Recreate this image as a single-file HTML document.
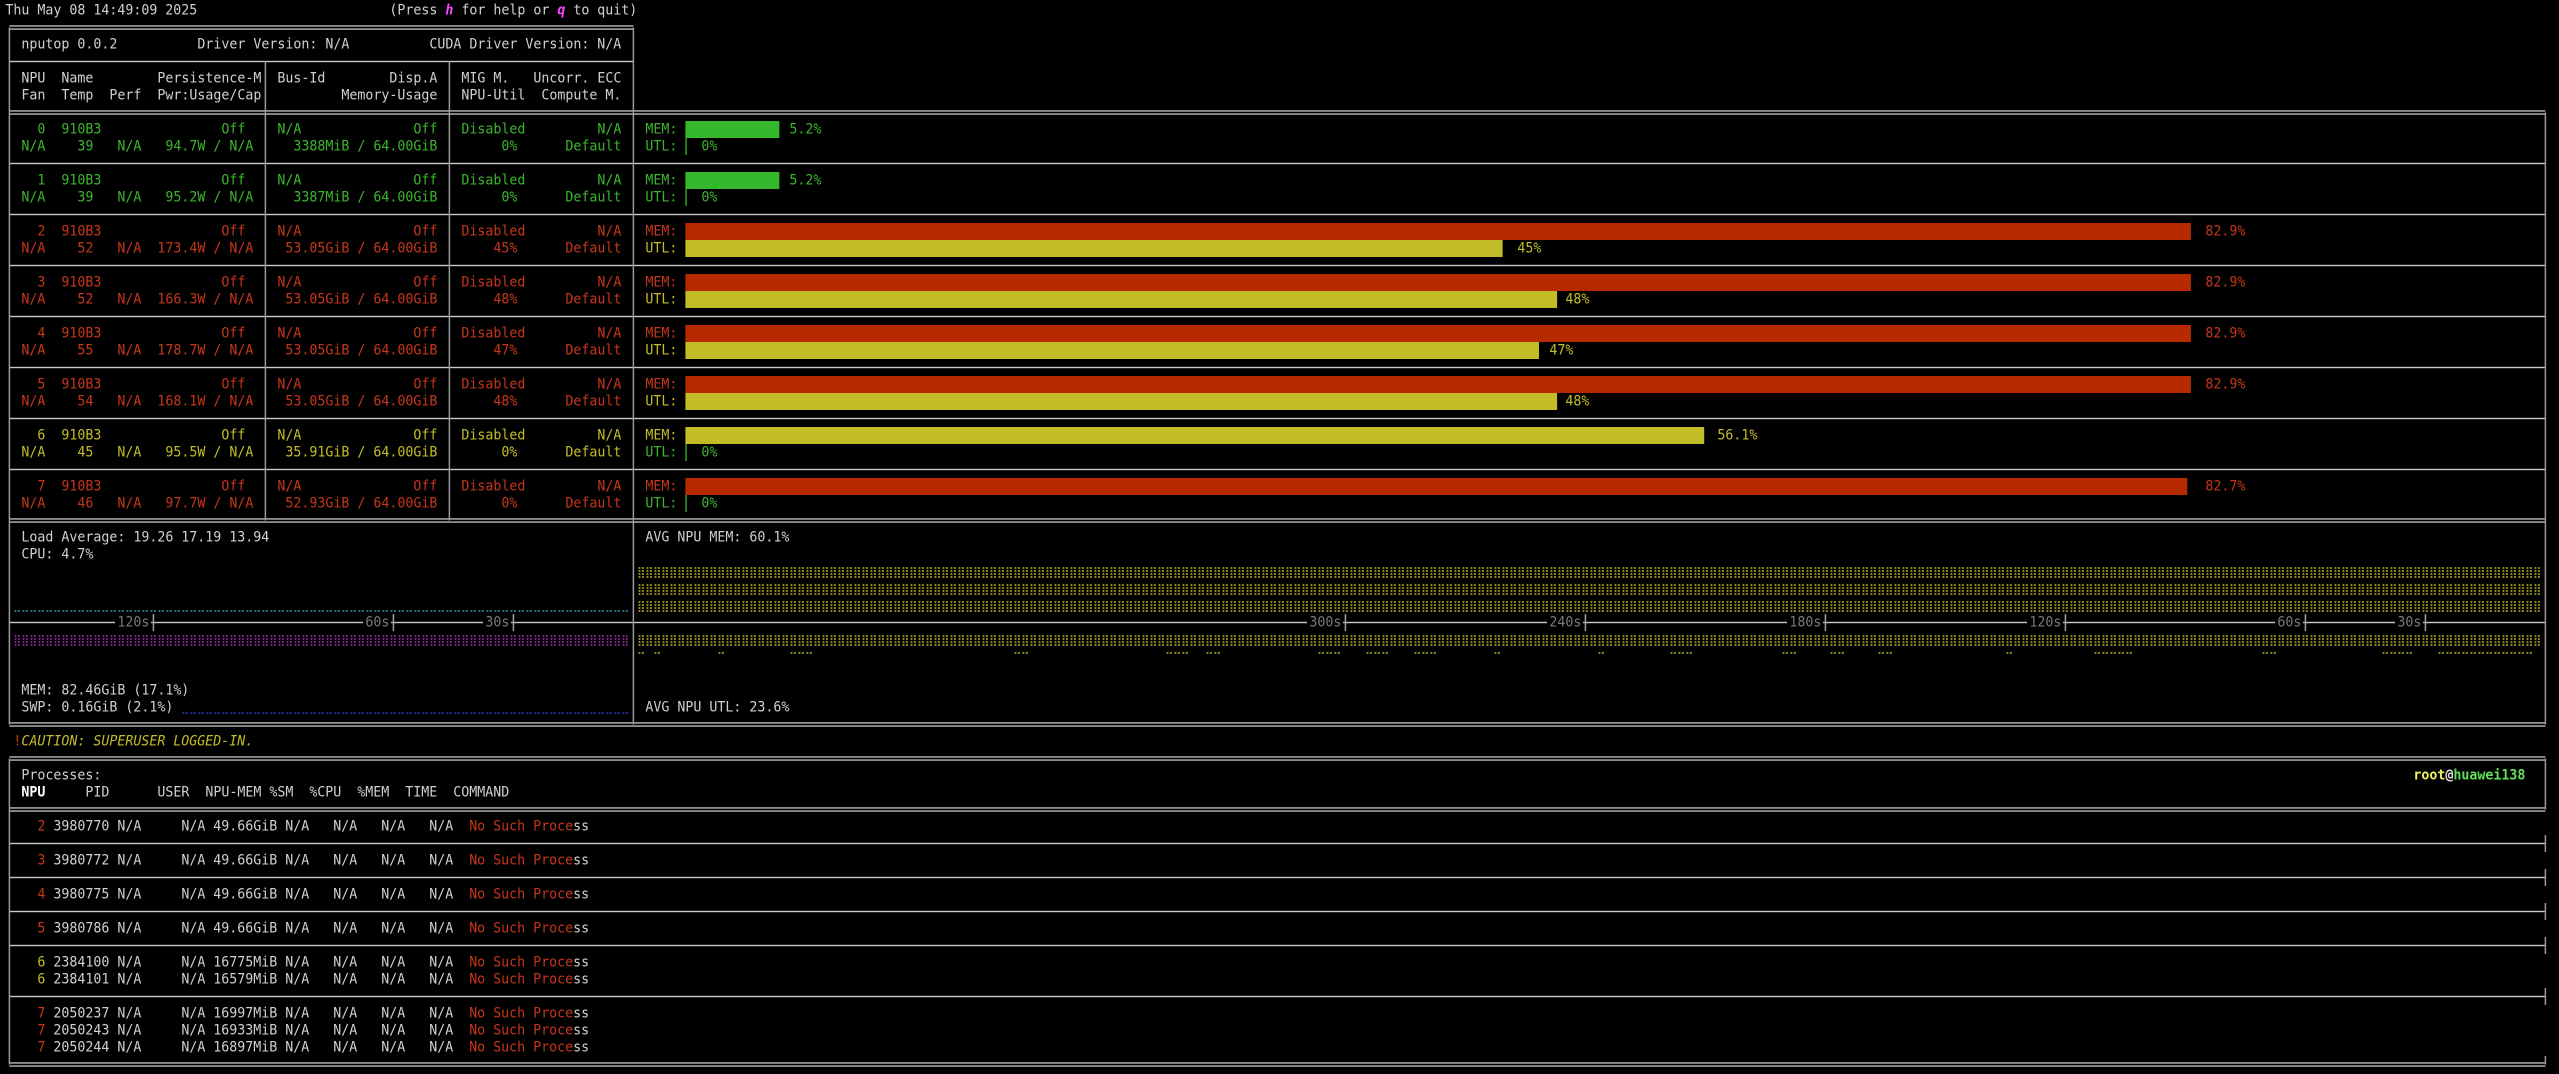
<!DOCTYPE html>
<html><head><meta charset="utf-8"><style>
html,body{margin:0;padding:0;background:#000;width:2559px;height:1074px;overflow:hidden}
#s{position:absolute;left:0;top:0}
.t{position:absolute;white-space:pre;left:calc(5.4px + var(--c)*8px);top:calc(2px + var(--r)*17px);line-height:17px;height:17px;font-family:"DejaVu Sans Mono","Liberation Mono",monospace;font-size:13.29px;color:#d0d0d0;transform:scaleY(1.08);transform-origin:50% 50%}
.g{color:#3cb52d}.r{color:#c6361a}.y{color:#c4bd2a}.gr{color:#7a7a7a;background:#000;padding:0 2px;margin-left:-2px}
.m{color:#ff45ff;font-weight:bold;font-style:italic}
</style></head><body>
<svg id="s" width="2559" height="1074" xmlns="http://www.w3.org/2000/svg">
<defs>
<pattern id="py" x="5.4" y="2" width="8" height="17" patternUnits="userSpaceOnUse"><g fill="#bdb524"><rect x="1.2" y="4.2" width="1.8" height="1.6"/><rect x="4.6" y="4.2" width="1.8" height="1.6"/><rect x="1.2" y="7.2" width="1.8" height="1.6"/><rect x="4.6" y="7.2" width="1.8" height="1.6"/><rect x="1.2" y="10.2" width="1.8" height="1.6"/><rect x="4.6" y="10.2" width="1.8" height="1.6"/><rect x="1.2" y="13.2" width="1.8" height="1.6"/><rect x="4.6" y="13.2" width="1.8" height="1.6"/></g></pattern>
<pattern id="pp" x="5.4" y="2" width="8" height="17" patternUnits="userSpaceOnUse"><g fill="#a62cae"><rect x="1.2" y="4.2" width="1.8" height="1.6"/><rect x="4.6" y="4.2" width="1.8" height="1.6"/><rect x="1.2" y="7.2" width="1.8" height="1.6"/><rect x="4.6" y="7.2" width="1.8" height="1.6"/><rect x="1.2" y="10.2" width="1.8" height="1.6"/><rect x="4.6" y="10.2" width="1.8" height="1.6"/><rect x="1.2" y="13.2" width="1.8" height="1.6"/><rect x="4.6" y="13.2" width="1.8" height="1.6"/></g></pattern>
<pattern id="pc" x="5.4" y="2" width="8" height="17" patternUnits="userSpaceOnUse"><g fill="#2aa6b4"><rect x="1.2" y="13.2" width="1.8" height="1.6"/><rect x="4.6" y="13.2" width="1.8" height="1.6"/></g></pattern>
<pattern id="pb" x="5.4" y="2" width="8" height="17" patternUnits="userSpaceOnUse"><g fill="#2a3ccc"><rect x="1.2" y="13.2" width="1.8" height="1.6"/><rect x="4.6" y="13.2" width="1.8" height="1.6"/></g></pattern>
<pattern id="pt" x="5.4" y="2" width="8" height="17" patternUnits="userSpaceOnUse"><g fill="#bdb524"><rect x="1.2" y="4.2" width="1.8" height="1.6"/><rect x="4.6" y="4.2" width="1.8" height="1.6"/></g></pattern>
</defs>
<!-- horizontal lines -->
<g fill="#c8c8c8">
<rect x="9.4" y="25.3" width="624" height="1.3"/><rect x="9.4" y="28.4" width="624" height="1.3"/>
<rect x="9.4" y="60.8" width="624" height="1.4"/>
<rect x="9.4" y="110.3" width="2536" height="1.3"/><rect x="9.4" y="113.4" width="2536" height="1.3"/>
<rect x="9.4" y="162.8" width="2536" height="1.4"/>
<rect x="9.4" y="213.8" width="2536" height="1.4"/>
<rect x="9.4" y="264.8" width="2536" height="1.4"/>
<rect x="9.4" y="315.8" width="2536" height="1.4"/>
<rect x="9.4" y="366.8" width="2536" height="1.4"/>
<rect x="9.4" y="417.8" width="2536" height="1.4"/>
<rect x="9.4" y="468.8" width="2536" height="1.4"/>
<rect x="9.4" y="518.3" width="2536" height="1.3"/><rect x="9.4" y="521.4" width="2536" height="1.3"/>
<rect x="9.4" y="621.8" width="2536" height="1.4"/>
<rect x="9.4" y="722.3" width="2536" height="1.3"/><rect x="9.4" y="725.4" width="2536" height="1.3"/>
<rect x="9.4" y="756.3" width="2536" height="1.3"/><rect x="9.4" y="759.4" width="2536" height="1.3"/>
<rect x="9.4" y="807.3" width="2536" height="1.3"/><rect x="9.4" y="810.4" width="2536" height="1.3"/>
<rect x="9.4" y="842.8" width="2536" height="1.4"/>
<rect x="9.4" y="876.8" width="2536" height="1.4"/>
<rect x="9.4" y="910.8" width="2536" height="1.4"/>
<rect x="9.4" y="944.8" width="2536" height="1.4"/>
<rect x="9.4" y="995.8" width="2536" height="1.4"/>
<rect x="9.4" y="1062.3" width="2536" height="1.3"/><rect x="9.4" y="1065.4" width="2536" height="1.3"/>
</g>
<!-- verticals -->
<g fill="#9a9a9a">
<rect x="8.65" y="27.5" width="1.5" height="697"/><rect x="8.65" y="758.5" width="1.5" height="306"/>
<rect x="264.65" y="61.5" width="1.5" height="459"/><rect x="448.65" y="61.5" width="1.5" height="459"/>
<rect x="632.65" y="27.5" width="1.5" height="697"/>
<rect x="2544.65" y="112.5" width="1.5" height="612"/><rect x="2544.65" y="758.5" width="1.5" height="51"/>
<rect x="2544.65" y="835" width="1.5" height="17"/><rect x="2544.65" y="869" width="1.5" height="17"/>
<rect x="2544.65" y="903" width="1.5" height="17"/><rect x="2544.65" y="937" width="1.5" height="17"/>
<rect x="2544.65" y="988" width="1.5" height="17"/><rect x="2544.65" y="1056" width="1.5" height="8.5"/>
<rect x="152.65" y="614" width="1.6" height="17"/><rect x="392.65" y="614" width="1.6" height="17"/><rect x="512.65" y="614" width="1.6" height="17"/>
<rect x="1344.65" y="614" width="1.6" height="17"/><rect x="1584.65" y="614" width="1.6" height="17"/><rect x="1824.65" y="614" width="1.6" height="17"/>
<rect x="2064.65" y="614" width="1.6" height="17"/><rect x="2304.65" y="614" width="1.6" height="17"/><rect x="2424.65" y="614" width="1.6" height="17"/>
</g>
<!-- bars -->
<rect x="685.4" y="121" width="94" height="17" fill="#34b82c"/><rect x="685.4" y="138" width="1.3" height="17" fill="#34b82c"/>
<rect x="685.4" y="172" width="94" height="17" fill="#34b82c"/><rect x="685.4" y="189" width="1.3" height="17" fill="#34b82c"/>
<rect x="685.4" y="223" width="1505.5" height="17" fill="#b72a00"/><rect x="685.4" y="240" width="817.2" height="17" fill="#c2bc26"/>
<rect x="685.4" y="274" width="1505.5" height="17" fill="#b72a00"/><rect x="685.4" y="291" width="871.7" height="17" fill="#c2bc26"/>
<rect x="685.4" y="325" width="1505.5" height="17" fill="#b72a00"/><rect x="685.4" y="342" width="853.6" height="17" fill="#c2bc26"/>
<rect x="685.4" y="376" width="1505.5" height="17" fill="#b72a00"/><rect x="685.4" y="393" width="871.7" height="17" fill="#c2bc26"/>
<rect x="685.4" y="427" width="1018.8" height="17" fill="#c2bc26"/><rect x="685.4" y="444" width="1.3" height="17" fill="#34b82c"/>
<rect x="685.4" y="478" width="1501.9" height="17" fill="#b72a00"/><rect x="685.4" y="495" width="1.3" height="17" fill="#34b82c"/>
<!-- graphs -->
<rect x="13.4" y="597" width="616" height="17" fill="url(#pc)"/>
<rect x="13.4" y="631" width="616" height="17" fill="url(#pp)"/>
<rect x="181.4" y="699" width="448" height="17" fill="url(#pb)"/>
<rect x="637.4" y="563" width="1904" height="17" fill="url(#py)"/>
<rect x="637.4" y="580" width="1904" height="17" fill="url(#py)"/>
<rect x="637.4" y="597" width="1904" height="17" fill="url(#py)"/>
<rect x="637.4" y="631" width="1904" height="17" fill="url(#py)"/>
<g fill="url(#pt)">
<rect x="637.4" y="648" width="8" height="17"/><rect x="653.4" y="648" width="8" height="17"/><rect x="717.4" y="648" width="8" height="17"/>
<rect x="789.4" y="648" width="24" height="17"/><rect x="1013.4" y="648" width="16" height="17"/><rect x="1165.4" y="648" width="24" height="17"/>
<rect x="1205.4" y="648" width="16" height="17"/><rect x="1317.4" y="648" width="24" height="17"/><rect x="1365.4" y="648" width="24" height="17"/>
<rect x="1413.4" y="648" width="24" height="17"/><rect x="1493.4" y="648" width="8" height="17"/><rect x="1597.4" y="648" width="8" height="17"/>
<rect x="1669.4" y="648" width="24" height="17"/><rect x="1781.4" y="648" width="16" height="17"/><rect x="1829.4" y="648" width="16" height="17"/>
<rect x="1877.4" y="648" width="16" height="17"/><rect x="2005.4" y="648" width="8" height="17"/><rect x="2093.4" y="648" width="40" height="17"/>
<rect x="2261.4" y="648" width="16" height="17"/><rect x="2381.4" y="648" width="32" height="17"/><rect x="2437.4" y="648" width="96" height="17"/>
</g>
</svg>

<div class="t" style="--c:0;--r:0">Thu May 08 14:49:09 2025</div>
<div class="t" style="--c:48;--r:0">(Press <span class="m">h</span> for help or <span class="m">q</span> to quit)</div>
<div class="t" style="--c:2;--r:2">nputop 0.0.2</div>
<div class="t" style="--c:24;--r:2">Driver Version: N/A</div>
<div class="t" style="--c:53;--r:2">CUDA Driver Version: N/A</div>
<div class="t" style="--c:2;--r:4">NPU  Name</div>
<div class="t" style="--c:19;--r:4">Persistence-M</div>
<div class="t" style="--c:34;--r:4">Bus-Id</div>
<div class="t" style="--c:48;--r:4">Disp.A</div>
<div class="t" style="--c:57;--r:4">MIG M.</div>
<div class="t" style="--c:66;--r:4">Uncorr. ECC</div>
<div class="t" style="--c:2;--r:5">Fan  Temp  Perf</div>
<div class="t" style="--c:19;--r:5">Pwr:Usage/Cap</div>
<div class="t" style="--c:42;--r:5">Memory-Usage</div>
<div class="t" style="--c:57;--r:5">NPU-Util</div>
<div class="t" style="--c:67;--r:5">Compute M.</div>

<!-- NPU 0 -->
<div class="t g" style="--c:4;--r:7">0  910B3</div><div class="t g" style="--c:27;--r:7">Off</div><div class="t g" style="--c:34;--r:7">N/A</div><div class="t g" style="--c:51;--r:7">Off</div><div class="t g" style="--c:57;--r:7">Disabled</div><div class="t g" style="--c:74;--r:7">N/A</div><div class="t g" style="--c:80;--r:7">MEM:</div><div class="t g" style="--c:98;--r:7">5.2%</div>
<div class="t g" style="--c:2;--r:8">N/A</div><div class="t g" style="--c:9;--r:8">39</div><div class="t g" style="--c:14;--r:8">N/A</div><div class="t g" style="--c:20;--r:8">94.7W / N/A</div><div class="t g" style="--c:36;--r:8">3388MiB / 64.00GiB</div><div class="t g" style="--c:62;--r:8">0%</div><div class="t g" style="--c:70;--r:8">Default</div><div class="t g" style="--c:80;--r:8">UTL:</div><div class="t g" style="--c:87;--r:8">0%</div>
<!-- NPU 1 -->
<div class="t g" style="--c:4;--r:10">1  910B3</div><div class="t g" style="--c:27;--r:10">Off</div><div class="t g" style="--c:34;--r:10">N/A</div><div class="t g" style="--c:51;--r:10">Off</div><div class="t g" style="--c:57;--r:10">Disabled</div><div class="t g" style="--c:74;--r:10">N/A</div><div class="t g" style="--c:80;--r:10">MEM:</div><div class="t g" style="--c:98;--r:10">5.2%</div>
<div class="t g" style="--c:2;--r:11">N/A</div><div class="t g" style="--c:9;--r:11">39</div><div class="t g" style="--c:14;--r:11">N/A</div><div class="t g" style="--c:20;--r:11">95.2W / N/A</div><div class="t g" style="--c:36;--r:11">3387MiB / 64.00GiB</div><div class="t g" style="--c:62;--r:11">0%</div><div class="t g" style="--c:70;--r:11">Default</div><div class="t g" style="--c:80;--r:11">UTL:</div><div class="t g" style="--c:87;--r:11">0%</div>
<!-- NPU 2 -->
<div class="t r" style="--c:4;--r:13">2  910B3</div><div class="t r" style="--c:27;--r:13">Off</div><div class="t r" style="--c:34;--r:13">N/A</div><div class="t r" style="--c:51;--r:13">Off</div><div class="t r" style="--c:57;--r:13">Disabled</div><div class="t r" style="--c:74;--r:13">N/A</div><div class="t r" style="--c:80;--r:13">MEM:</div><div class="t r" style="--c:275;--r:13">82.9%</div>
<div class="t r" style="--c:2;--r:14">N/A</div><div class="t r" style="--c:9;--r:14">52</div><div class="t r" style="--c:14;--r:14">N/A</div><div class="t r" style="--c:19;--r:14">173.4W / N/A</div><div class="t r" style="--c:35;--r:14">53.05GiB / 64.00GiB</div><div class="t r" style="--c:61;--r:14">45%</div><div class="t r" style="--c:70;--r:14">Default</div><div class="t y" style="--c:80;--r:14">UTL:</div><div class="t y" style="--c:189;--r:14">45%</div>
<!-- NPU 3 -->
<div class="t r" style="--c:4;--r:16">3  910B3</div><div class="t r" style="--c:27;--r:16">Off</div><div class="t r" style="--c:34;--r:16">N/A</div><div class="t r" style="--c:51;--r:16">Off</div><div class="t r" style="--c:57;--r:16">Disabled</div><div class="t r" style="--c:74;--r:16">N/A</div><div class="t r" style="--c:80;--r:16">MEM:</div><div class="t r" style="--c:275;--r:16">82.9%</div>
<div class="t r" style="--c:2;--r:17">N/A</div><div class="t r" style="--c:9;--r:17">52</div><div class="t r" style="--c:14;--r:17">N/A</div><div class="t r" style="--c:19;--r:17">166.3W / N/A</div><div class="t r" style="--c:35;--r:17">53.05GiB / 64.00GiB</div><div class="t r" style="--c:61;--r:17">48%</div><div class="t r" style="--c:70;--r:17">Default</div><div class="t y" style="--c:80;--r:17">UTL:</div><div class="t y" style="--c:195;--r:17">48%</div>
<!-- NPU 4 -->
<div class="t r" style="--c:4;--r:19">4  910B3</div><div class="t r" style="--c:27;--r:19">Off</div><div class="t r" style="--c:34;--r:19">N/A</div><div class="t r" style="--c:51;--r:19">Off</div><div class="t r" style="--c:57;--r:19">Disabled</div><div class="t r" style="--c:74;--r:19">N/A</div><div class="t r" style="--c:80;--r:19">MEM:</div><div class="t r" style="--c:275;--r:19">82.9%</div>
<div class="t r" style="--c:2;--r:20">N/A</div><div class="t r" style="--c:9;--r:20">55</div><div class="t r" style="--c:14;--r:20">N/A</div><div class="t r" style="--c:19;--r:20">178.7W / N/A</div><div class="t r" style="--c:35;--r:20">53.05GiB / 64.00GiB</div><div class="t r" style="--c:61;--r:20">47%</div><div class="t r" style="--c:70;--r:20">Default</div><div class="t y" style="--c:80;--r:20">UTL:</div><div class="t y" style="--c:193;--r:20">47%</div>
<!-- NPU 5 -->
<div class="t r" style="--c:4;--r:22">5  910B3</div><div class="t r" style="--c:27;--r:22">Off</div><div class="t r" style="--c:34;--r:22">N/A</div><div class="t r" style="--c:51;--r:22">Off</div><div class="t r" style="--c:57;--r:22">Disabled</div><div class="t r" style="--c:74;--r:22">N/A</div><div class="t r" style="--c:80;--r:22">MEM:</div><div class="t r" style="--c:275;--r:22">82.9%</div>
<div class="t r" style="--c:2;--r:23">N/A</div><div class="t r" style="--c:9;--r:23">54</div><div class="t r" style="--c:14;--r:23">N/A</div><div class="t r" style="--c:19;--r:23">168.1W / N/A</div><div class="t r" style="--c:35;--r:23">53.05GiB / 64.00GiB</div><div class="t r" style="--c:61;--r:23">48%</div><div class="t r" style="--c:70;--r:23">Default</div><div class="t y" style="--c:80;--r:23">UTL:</div><div class="t y" style="--c:195;--r:23">48%</div>
<!-- NPU 6 -->
<div class="t y" style="--c:4;--r:25">6  910B3</div><div class="t y" style="--c:27;--r:25">Off</div><div class="t y" style="--c:34;--r:25">N/A</div><div class="t y" style="--c:51;--r:25">Off</div><div class="t y" style="--c:57;--r:25">Disabled</div><div class="t y" style="--c:74;--r:25">N/A</div><div class="t y" style="--c:80;--r:25">MEM:</div><div class="t y" style="--c:214;--r:25">56.1%</div>
<div class="t y" style="--c:2;--r:26">N/A</div><div class="t y" style="--c:9;--r:26">45</div><div class="t y" style="--c:14;--r:26">N/A</div><div class="t y" style="--c:20;--r:26">95.5W / N/A</div><div class="t y" style="--c:35;--r:26">35.91GiB / 64.00GiB</div><div class="t y" style="--c:62;--r:26">0%</div><div class="t y" style="--c:70;--r:26">Default</div><div class="t g" style="--c:80;--r:26">UTL:</div><div class="t g" style="--c:87;--r:26">0%</div>
<!-- NPU 7 -->
<div class="t r" style="--c:4;--r:28">7  910B3</div><div class="t r" style="--c:27;--r:28">Off</div><div class="t r" style="--c:34;--r:28">N/A</div><div class="t r" style="--c:51;--r:28">Off</div><div class="t r" style="--c:57;--r:28">Disabled</div><div class="t r" style="--c:74;--r:28">N/A</div><div class="t r" style="--c:80;--r:28">MEM:</div><div class="t r" style="--c:275;--r:28">82.7%</div>
<div class="t r" style="--c:2;--r:29">N/A</div><div class="t r" style="--c:9;--r:29">46</div><div class="t r" style="--c:14;--r:29">N/A</div><div class="t r" style="--c:20;--r:29">97.7W / N/A</div><div class="t r" style="--c:35;--r:29">52.93GiB / 64.00GiB</div><div class="t r" style="--c:62;--r:29">0%</div><div class="t r" style="--c:70;--r:29">Default</div><div class="t g" style="--c:80;--r:29">UTL:</div><div class="t g" style="--c:87;--r:29">0%</div>

<!-- graphs text -->
<div class="t" style="--c:2;--r:31">Load Average: 19.26 17.19 13.94</div>
<div class="t" style="--c:2;--r:32">CPU: 4.7%</div>
<div class="t" style="--c:80;--r:31">AVG NPU MEM: 60.1%</div>
<div class="t" style="--c:2;--r:40">MEM: 82.46GiB (17.1%)</div>
<div class="t" style="--c:2;--r:41">SWP: 0.16GiB (2.1%)</div>
<div class="t" style="--c:80;--r:41">AVG NPU UTL: 23.6%</div>
<div class="t gr" style="--c:14;--r:36">120s</div>
<div class="t gr" style="--c:45;--r:36">60s</div>
<div class="t gr" style="--c:60;--r:36">30s</div>
<div class="t gr" style="--c:163;--r:36">300s</div>
<div class="t gr" style="--c:193;--r:36">240s</div>
<div class="t gr" style="--c:223;--r:36">180s</div>
<div class="t gr" style="--c:253;--r:36">120s</div>
<div class="t gr" style="--c:284;--r:36">60s</div>
<div class="t gr" style="--c:299;--r:36">30s</div>

<div class="t r" style="--c:1;--r:43">!</div>
<div class="t y" style="--c:2;--r:43;font-style:italic">CAUTION: SUPERUSER LOGGED-IN.</div>

<!-- processes -->
<div class="t" style="--c:2;--r:45">Processes:</div>
<div class="t" style="--c:301;--r:45;font-weight:bold"><span style="color:#f2f25a">root</span><span style="color:#e8e8e8">@</span><span style="color:#62e05a">huawei138</span></div>
<div class="t" style="--c:2;--r:46;color:#fff;font-weight:bold">NPU</div>
<div class="t" style="--c:10;--r:46">PID</div>
<div class="t" style="--c:19;--r:46">USER  NPU-MEM %SM  %CPU  %MEM  TIME  COMMAND</div>

<div class="t r" style="--c:4;--r:48">2</div><div class="t" style="--c:6;--r:48">3980770 N/A     N/A 49.66GiB N/A   N/A   N/A   N/A  <span class="r">No Such Proce</span>ss</div>
<div class="t r" style="--c:4;--r:50">3</div><div class="t" style="--c:6;--r:50">3980772 N/A     N/A 49.66GiB N/A   N/A   N/A   N/A  <span class="r">No Such Proce</span>ss</div>
<div class="t r" style="--c:4;--r:52">4</div><div class="t" style="--c:6;--r:52">3980775 N/A     N/A 49.66GiB N/A   N/A   N/A   N/A  <span class="r">No Such Proce</span>ss</div>
<div class="t r" style="--c:4;--r:54">5</div><div class="t" style="--c:6;--r:54">3980786 N/A     N/A 49.66GiB N/A   N/A   N/A   N/A  <span class="r">No Such Proce</span>ss</div>
<div class="t y" style="--c:4;--r:56">6</div><div class="t" style="--c:6;--r:56">2384100 N/A     N/A 16775MiB N/A   N/A   N/A   N/A  <span class="r">No Such Proce</span>ss</div>
<div class="t y" style="--c:4;--r:57">6</div><div class="t" style="--c:6;--r:57">2384101 N/A     N/A 16579MiB N/A   N/A   N/A   N/A  <span class="r">No Such Proce</span>ss</div>
<div class="t r" style="--c:4;--r:59">7</div><div class="t" style="--c:6;--r:59">2050237 N/A     N/A 16997MiB N/A   N/A   N/A   N/A  <span class="r">No Such Proce</span>ss</div>
<div class="t r" style="--c:4;--r:60">7</div><div class="t" style="--c:6;--r:60">2050243 N/A     N/A 16933MiB N/A   N/A   N/A   N/A  <span class="r">No Such Proce</span>ss</div>
<div class="t r" style="--c:4;--r:61">7</div><div class="t" style="--c:6;--r:61">2050244 N/A     N/A 16897MiB N/A   N/A   N/A   N/A  <span class="r">No Such Proce</span>ss</div>
</body></html>
